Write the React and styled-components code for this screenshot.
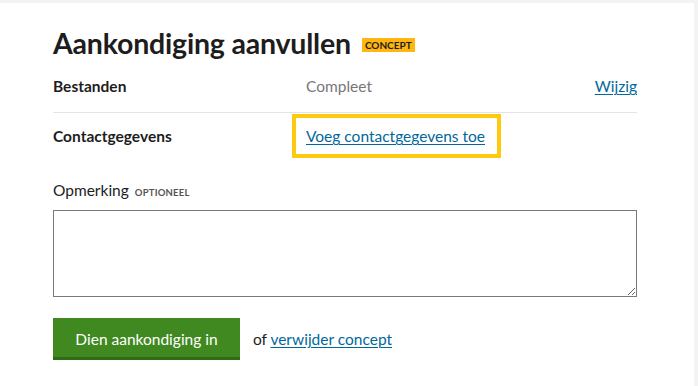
import styled, { createGlobalStyle } from 'styled-components';

const GlobalStyle = createGlobalStyle`
  html, body {
    margin: 0;
    padding: 0;
    background: #f3f3f3;
  }
  body {
    font-family: Lato, "Noto Sans", sans-serif;
    color: #1a1a1a;
  }
`;

const Page = styled.div`
  width: 698px;
  height: 386px;
  padding: 3px 4px 0 0;
  box-sizing: border-box;
  background: #f3f3f3;
`;

const Panel = styled.main`
  background: #fff;
  height: 100%;
  padding: 23px 57px 0 53px;
  box-sizing: border-box;
`;

const TitleRow = styled.div`
  display: flex;
  align-items: center;
  gap: 11px;
  margin-bottom: 3px;
`;

const Title = styled.h1`
  margin: 0;
  font-size: 28.5px;
  line-height: 34px;
  font-weight: 700;
  color: #1d1d1d;
  letter-spacing: -0.2px;
`;

const Tag = styled.span`
  background: #ffb612;
  color: #1d1d1d;
  font-size: 10px;
  font-weight: 700;
  line-height: 14px;
  padding: 0 3px;
  text-transform: uppercase;
  margin-top: 3px;
`;

const SummaryList = styled.dl`
  margin: 0;
`;

const SummaryRow = styled.div`
  display: grid;
  grid-template-columns: 253px 1fr auto;
  align-items: start;
  padding: 12px 0 15px;
  border-bottom: ${p => (p.$last ? 'none' : '1px solid #e4e4e4')};
  font-size: 15.5px;
  line-height: 22px;
`;

const Key = styled.dt`
  font-weight: 700;
  font-size: 15.5px;
  color: #1d1d1d;
`;

const Value = styled.dd`
  margin: 0;
  color: ${p => (p.$muted ? '#777' : '#1d1d1d')};
`;

const Action = styled.dd`
  margin: 0;
`;

const Link = styled.a`
  color: #01689b;
  text-decoration: underline;
  text-underline-offset: 2px;
  text-decoration-thickness: 1px;
  font-size: 15.5px;
`;

const FocusedLink = styled(Link)`
  display: inline-block;
  padding: 7px 12px 7px 10px;
  margin: -7px 0 -7px -10px;
  outline: 4px solid #ffc90e;
  line-height: 22px;
`;

const Field = styled.div`
  margin-top: 18px;
`;

const Label = styled.label`
  display: block;
  font-size: 15.5px;
  line-height: 20px;
  color: #1d1d1d;
  margin-bottom: 7px;
`;

const Optional = styled.span`
  font-size: 9.5px;
  font-weight: 700;
  color: #555;
  text-transform: uppercase;
  letter-spacing: 0.2px;
  margin-left: 2px;
`;

const TextArea = styled.textarea`
  display: block;
  width: 584px;
  height: 87px;
  box-sizing: border-box;
  border: 1px solid #7a7a7a;
  border-radius: 0;
  margin: 0;
  font-family: inherit;
`;

const Actions = styled.div`
  display: flex;
  align-items: center;
  gap: 13px;
  margin-top: 21px;
  font-size: 15.5px;
`;

const PrimaryButton = styled.button`
  background: #408921;
  color: #fff;
  border: none;
  border-bottom: 3px solid #2e6b17;
  height: 42px;
  width: 187px;
  font-family: inherit;
  font-size: 15.5px;
  padding: 2px 0 0;
  cursor: pointer;
`;

const Alt = styled.span`
  color: #1d1d1d;
`;

export default function App() {
  return (
    <>
      <GlobalStyle />
      <Page>
        <Panel>
          <TitleRow>
            <Title>Aankondiging aanvullen</Title>
            <Tag>Concept</Tag>
          </TitleRow>
          <SummaryList>
            <SummaryRow>
              <Key>Bestanden</Key>
              <Value $muted>Compleet</Value>
              <Action><Link href="#">Wijzig</Link></Action>
            </SummaryRow>
            <SummaryRow $last>
              <Key>Contactgegevens</Key>
              <Value><FocusedLink href="#">Voeg contactgegevens toe</FocusedLink></Value>
              <Action />
            </SummaryRow>
          </SummaryList>
          <Field>
            <Label>Opmerking <Optional>Optioneel</Optional></Label>
            <TextArea />
          </Field>
          <Actions>
            <PrimaryButton>Dien aankondiging in</PrimaryButton>
            <Alt>of <Link href="#">verwijder concept</Link></Alt>
          </Actions>
        </Panel>
      </Page>
    </>
  );
}
